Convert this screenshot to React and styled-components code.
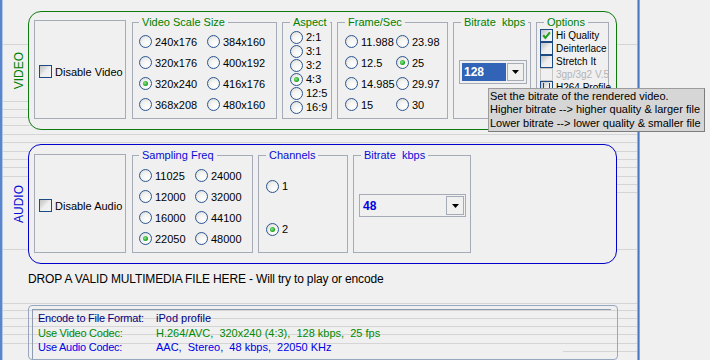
import React from 'react';
import styled, { createGlobalStyle } from 'styled-components';

const GlobalStyle = createGlobalStyle`
  html, body { margin: 0; padding: 0; background: #f0f0f0; }
  body { font-family: "Liberation Sans", Arial, sans-serif; font-size: 11px; color: #000; }
  * { box-sizing: border-box; }
`;

const LINES = [
  [44, 0, 640], [101, 0, 640], [109, 0, 640], [117, 0, 640], [125, 0, 640],
  [134, 0, 640], [142, 0, 640], [151, 0, 640], [159, 0, 640], [167, 0, 640],
  [176, 0, 640], [184, 560, 640], [192, 560, 640], [249, 0, 640],
  [303, 0, 640], [310, 0, 640], [318, 0, 640], [326, 0, 640], [334, 0, 640],
  [343, 0, 640], [351, 560, 640],
];
const lineBackground = LINES.map(
  ([y, x0, x1]) => `linear-gradient(#d5d5d5, #d5d5d5) ${x0}px ${y}px / ${x1 - x0}px 1px no-repeat`
).join(', ');

const GREEN_BORDER = '#0e7a0e';
const GREEN_TEXT = '#008000';
const BLUE_BORDER = '#0000c8';
const BLUE_TEXT = '#0a0ad8';
const BOX_BORDER = '#a5acb7';

const Screen = styled.div`
  position: relative;
  display: flex;
  width: 710px;
  height: 360px;
  overflow: hidden;
  background: #f0f0f0;
`;
const LeftRail = styled.div`
  flex: none;
  width: 3px;
  background: linear-gradient(to right, #5a85cc 0 2px, #b2c6e6 2px 3px);
`;
const ListArea = styled.div`
  flex: none;
  width: 634px;
  display: flex;
  flex-direction: column;
  padding-top: 11px;
  background: ${lineBackground};
`;
const Divider = styled.div`
  flex: none;
  width: 3px;
  background: linear-gradient(to right, #8fb0e2 0 1px, #4a77c2 1px 2px, #86a6dc 2px 3px);
`;
const RightPane = styled.div`
  flex: 1;
  background: #f0f0f0;
`;

const Section = styled.section`
  display: flex;
  height: ${p => p.$h}px;
  margin-top: ${p => p.$mt || 0}px;
`;
const SideColumn = styled.div`
  flex: none;
  width: 25px;
  padding-left: 6px;
  display: flex;
  align-items: center;
  justify-content: center;
`;
const SideText = styled.span`
  writing-mode: vertical-rl;
  transform: rotate(180deg);
  font-size: 12px;
  line-height: 12px;
  color: ${p => p.$color};
`;
const Panel = styled.div`
  flex: none;
  width: 589px;
  height: 100%;
  border: 1px solid ${p => p.$color};
  border-radius: 13px;
  background: #f0f0f0;
  display: flex;
  align-items: flex-start;
  gap: 5px;
  padding: ${p => p.$pt}px 0 0 5px;
`;

const DisableBox = styled.div`
  flex: none;
  width: 92px;
  height: 99px;
  margin-right: 1px;
  border: 1px solid ${BOX_BORDER};
  display: flex;
  align-items: center;
  padding: 4px 0 0 4px;
  white-space: nowrap;
`;

const GroupBox = styled.div`
  position: relative;
  flex: none;
  width: ${p => p.$w}px;
  height: ${p => p.$h}px;
  margin-top: ${p => p.$mt}px;
  border: 1px solid ${BOX_BORDER};
`;
const GroupTitle = styled.span`
  position: absolute;
  top: -7px;
  left: ${p => p.$left ?? 7}px;
  padding: 0 3px;
  background: #f0f0f0;
  color: ${p => p.$color};
  font-size: 11px;
  line-height: 13px;
  white-space: pre;
`;
const RadioGrid = styled.div`
  display: grid;
  grid-template-columns: ${p => p.$cols};
  grid-auto-rows: ${p => p.$row}px;
  padding: ${p => p.$pt}px 0 0 ${p => p.$pl}px;
`;
const RadioStack = styled.div`
  display: flex;
  flex-direction: column;
  gap: ${p => p.$gap}px;
  padding: ${p => p.$pt}px 0 0 ${p => p.$pl}px;
`;
const RadioItem = styled.label`
  display: flex;
  align-items: center;
  height: ${p => p.$h || 14}px;
  white-space: nowrap;
`;
const RadioCircle = styled.span`
  flex: none;
  width: 13px;
  height: 13px;
  margin-right: 3px;
  border-radius: 50%;
  border: 1px solid #2c5591;
  background: radial-gradient(circle at 65% 70%, #ffffff 0%, #f4f4f2 45%, #d6d6d0 100%);
  display: flex;
  align-items: center;
  justify-content: center;
`;
const RadioDot = styled.span`
  width: 5px;
  height: 5px;
  border-radius: 50%;
  background: radial-gradient(circle at 40% 40%, #8ee88e 0%, #22a822 60%, #17821a 100%);
`;

const CheckBox = styled.span`
  flex: none;
  width: 13px;
  height: 13px;
  border: 1px solid ${p => (p.$disabled ? '#c6c6c6' : '#1d4a85')};
  background: ${p =>
    p.$disabled
      ? '#f0f0f0'
      : 'linear-gradient(135deg, #c4c4c4 0%, #d8d8d8 30%, #eeeeee 50%, #f4f4f4 100%)'};
  display: flex;
  align-items: center;
  justify-content: center;
`;
const CheckLabel = styled.span`
  margin-left: 3px;
  font-size: ${p => p.$size || 11}px;
  color: ${p => (p.$disabled ? '#b4b4b4' : '#000')};
  white-space: nowrap;
`;
const OptionList = styled.div`
  display: flex;
  flex-direction: column;
  padding: 6px 0 0 3px;
`;
const OptionRow = styled.div`
  display: flex;
  align-items: center;
  height: 13px;
`;

const ComboHolder = styled.div`
  height: 100%;
  display: flex;
  align-items: center;
  padding: 3px 0 0 5px;
`;
const Combo = styled.div`
  display: flex;
  width: ${p => p.$w}px;
  height: ${p => p.$h}px;
  border: 1px solid ${BOX_BORDER};
  padding: ${p => p.$pad}px;
  gap: 1px;
  background: #f0f0f0;
`;
const ComboField = styled.div`
  flex: 1;
  display: flex;
  align-items: center;
  padding-left: 2px;
  font-weight: bold;
  font-size: 12px;
  color: ${p => (p.$selected ? '#ffffff' : '#0000e0')};
  background: ${p => (p.$selected ? '#3163b6' : 'transparent')};
`;
const ComboButton = styled.div`
  flex: none;
  width: ${p => p.$w}px;
  border: 1px solid ${BOX_BORDER};
  display: flex;
  align-items: center;
  justify-content: center;
`;

const DropText = styled.div`
  margin: 8px 0 0 25px;
  font-size: 12px;
  line-height: 14px;
  letter-spacing: -0.15px;
  color: #000;
  white-space: nowrap;
`;

const InfoBox = styled.div`
  margin: 19px 0 0 25px;
  width: 590px;
  height: 55px;
  border: 1px solid #98a7c1;
  border-radius: 4px;
  padding: 3px 6px 0 3px;
`;
const InfoInner = styled.div`
  height: 100%;
  border-top: 1px solid #8f9bb0;
  border-left: 1px solid #8f9bb0;
  padding: 1px 0 0 5px;
  display: grid;
  grid-template-columns: 118px 1fr;
  grid-auto-rows: 14.5px;
  align-items: center;
  font-size: 11px;
  line-height: 14.5px;
`;
const InfoCell = styled.span`
  color: ${p => p.$color};
  white-space: pre;
  letter-spacing: ${p => (p.$label ? '-0.25px' : '0')};
`;

const Tooltip = styled.div`
  position: absolute;
  left: 488px;
  top: 88px;
  width: 217px;
  height: 44px;
  padding: 1px 0 0 1px;
  background: #d6d6d6;
  border: 1px solid #9c9c9c;
  border-right-color: #7c7c7c;
  border-bottom-color: #7c7c7c;
  font-size: 11px;
  line-height: 13.3px;
  color: #000;
  white-space: pre;
`;

const Arrow = () => (
  <svg width="7" height="4" viewBox="0 0 7 4">
    <polygon points="0,0 7,0 3.5,4" fill="#000" />
  </svg>
);

const CheckMark = () => (
  <svg width="9" height="9" viewBox="0 0 9 9">
    <path d="M1.2 4.2 L3.4 6.8 L7.9 1.4" stroke="#22a022" strokeWidth="2.1" fill="none" />
  </svg>
);

const Radio = ({ label, checked, h }) => (
  <RadioItem $h={h}>
    <RadioCircle>{checked && <RadioDot />}</RadioCircle>
    {label}
  </RadioItem>
);

const Check = ({ label, checked, disabled, size, partial }) => (
  <OptionRow>
    <CheckBox $disabled={disabled}>
      {checked && <CheckMark />}
      {partial && (
        <svg width="9" height="9" viewBox="0 0 9 9">
          <path d="M1.5 0 V7.5 H7.5 V0" stroke="#1d4a85" strokeWidth="1" fill="none" />
        </svg>
      )}
    </CheckBox>
    <CheckLabel $size={size} $disabled={disabled}>{label}</CheckLabel>
  </OptionRow>
);

const videoSizes = [
  ['240x176', false], ['384x160', false],
  ['320x176', false], ['400x192', false],
  ['320x240', true], ['416x176', false],
  ['368x208', false], ['480x160', false],
];
const aspects = [['2:1'], ['3:1'], ['3:2'], ['4:3', true], ['12:5'], ['16:9']];
const fps = [
  ['11.988'], ['23.98'], ['12.5'], ['25', true], ['14.985'], ['29.97'], ['15'], ['30'],
];
const freqs = [
  ['11025'], ['24000'], ['12000'], ['32000'], ['16000'], ['44100'], ['22050', true], ['48000'],
];

export default function App() {
  return (
    <>
      <GlobalStyle />
      <Screen>
        <LeftRail />
        <ListArea>
          <Section $h={119}>
            <SideColumn>
              <SideText $color={GREEN_TEXT}>VIDEO</SideText>
            </SideColumn>
            <Panel $color={GREEN_BORDER} $pt={8}>
              <DisableBox>
                <CheckBox />
                <CheckLabel>Disable Video</CheckLabel>
              </DisableBox>
              <GroupBox $w={145} $h={97} $mt={2}>
                <GroupTitle $color={GREEN_TEXT} $left={6}>Video Scale Size</GroupTitle>
                <RadioGrid $cols="68px auto" $row={21} $pt={8} $pl={6}>
                  {videoSizes.map(([l, c]) => (
                    <Radio key={l} label={l} checked={c} h={21} />
                  ))}
                </RadioGrid>
              </GroupBox>
              <GroupBox $w={50} $h={97} $mt={2}>
                <GroupTitle $color={GREEN_TEXT}>Aspect</GroupTitle>
                <RadioGrid $cols="auto" $row={14} $pt={7} $pl={7}>
                  {aspects.map(([l, c]) => (
                    <Radio key={l} label={l} checked={c} h={14} />
                  ))}
                </RadioGrid>
              </GroupBox>
              <GroupBox $w={111} $h={97} $mt={2}>
                <GroupTitle $color={GREEN_TEXT}>Frame/Sec</GroupTitle>
                <RadioGrid $cols="51px auto" $row={21} $pt={8} $pl={7}>
                  {fps.map(([l, c]) => (
                    <Radio key={l} label={l} checked={c} h={21} />
                  ))}
                </RadioGrid>
              </GroupBox>
              <GroupBox $w={78} $h={97} $mt={2}>
                <GroupTitle $color={GREEN_TEXT}>{'Bitrate  kbps'}</GroupTitle>
                <ComboHolder>
                  <Combo $w={68} $h={24} $pad={2}>
                    <ComboField $selected>128</ComboField>
                    <ComboButton $w={17}>
                      <Arrow />
                    </ComboButton>
                  </Combo>
                </ComboHolder>
              </GroupBox>
              <GroupBox $w={73} $h={97} $mt={2}>
                <GroupTitle $color={GREEN_TEXT}>Options</GroupTitle>
                <OptionList>
                  <Check label="Hi Quality" checked size={10} />
                  <Check label="Deinterlace" size={10} />
                  <Check label="Stretch It" size={10} />
                  <Check label="3gp/3g2 V.5" disabled size={10} />
                  <Check label="H264 Profile" partial size={10} />
                </OptionList>
              </GroupBox>
            </Panel>
          </Section>

          <Section $h={120} $mt={14}>
            <SideColumn>
              <SideText $color={BLUE_TEXT}>AUDIO</SideText>
            </SideColumn>
            <Panel $color={BLUE_BORDER} $pt={9}>
              <DisableBox>
                <CheckBox />
                <CheckLabel>Disable Audio</CheckLabel>
              </DisableBox>
              <GroupBox $w={121} $h={98} $mt={1}>
                <GroupTitle $color={BLUE_TEXT} $left={6}>Sampling Freq</GroupTitle>
                <RadioGrid $cols="56px auto" $row={21} $pt={9} $pl={6}>
                  {freqs.map(([l, c]) => (
                    <Radio key={l} label={l} checked={c} h={21} />
                  ))}
                </RadioGrid>
              </GroupBox>
              <GroupBox $w={90} $h={98} $mt={1}>
                <GroupTitle $color={BLUE_TEXT}>Channels</GroupTitle>
                <RadioStack $gap={29} $pt={23} $pl={7}>
                  <Radio label="1" h={14} />
                  <Radio label="2" checked h={14} />
                </RadioStack>
              </GroupBox>
              <GroupBox $w={118} $h={98} $mt={1}>
                <GroupTitle $color={BLUE_TEXT}>{'Bitrate  kbps'}</GroupTitle>
                <ComboHolder>
                  <Combo $w={107} $h={23} $pad={1}>
                    <ComboField>48</ComboField>
                    <ComboButton $w={18}>
                      <Arrow />
                    </ComboButton>
                  </Combo>
                </ComboHolder>
              </GroupBox>
            </Panel>
          </Section>

          <DropText>DROP A VALID MULTIMEDIA FILE HERE - Will try to play or encode</DropText>

          <InfoBox>
            <InfoInner>
              <InfoCell $label $color="#000080">Encode to File Format:</InfoCell>
              <InfoCell $color="#000080">iPod profile</InfoCell>
              <InfoCell $label $color="#008a00">Use Video Codec:</InfoCell>
              <InfoCell $color="#008a00">{'H.264/AVC,  320x240 (4:3),  128 kbps,  25 fps'}</InfoCell>
              <InfoCell $label $color="#0000e6">Use Audio Codec:</InfoCell>
              <InfoCell $color="#0000e6">{'AAC,  Stereo,  48 kbps,  22050 KHz'}</InfoCell>
            </InfoInner>
          </InfoBox>
        </ListArea>
        <Divider />
        <RightPane />
        <Tooltip>
          {'Set the bitrate of the rendered video.\nHigher bitrate --> higher quality & larger file\nLower bitrate --> lower quality & smaller file'}
        </Tooltip>
      </Screen>
    </>
  );
}
